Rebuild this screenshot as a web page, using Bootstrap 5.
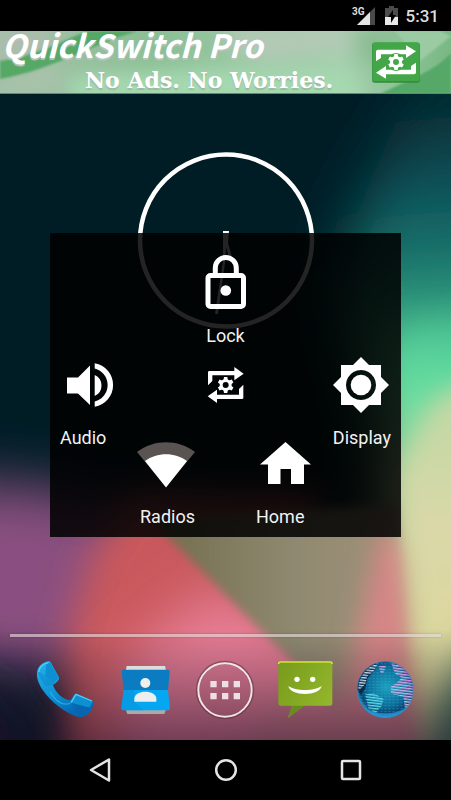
<!DOCTYPE html>
<html lang="en">
<head>
<meta charset="utf-8">
<meta name="viewport" content="width=device-width, initial-scale=1">
<title>QuickSwitch Pro</title>
<link href="https://cdn.jsdelivr.net/npm/bootstrap@5.3.0/dist/css/bootstrap.min.css" rel="stylesheet">
<style>
body { font-family: Roboto, "Liberation Sans", sans-serif; background: #000; }
svg { display: block; }
.status-bar { height: 31px; padding-right: 12px; color: #dedede; font-size: 17px; line-height: 20px; }
.promo { height: 63px; padding: 0 31px 0 2px; color: #fff; background: #9cc9a5; }
.promo:hover { color: #fff; }
.promo-title { font: italic 700 32px/26px "Noto Sans CJK JP", "Noto Sans", sans-serif; text-shadow: 0 2px 1px #b9c4bb; }
.promo-sub { font: bold 22px/22px "DejaVu Serif", serif; margin-top: 12px; padding-left: 83px; text-shadow: 0 2px 1px #9db8a3; }
.backdrop { z-index: 0; }
.clock-face { top: 57px; left: 0; right: 0; }
.home-area { padding-top: 139px; }
.switcher { margin: 0 50px; padding: 22px 10px 10px; background: rgba(0, 0, 0, .86); z-index: 1; }
.tile { gap: 15px; color: #f2f2f2; font-size: 18px; line-height: 20px; width: 58px; }
.row-mid { margin-top: 11px; }
.row-low { margin-top: -6px; gap: 61px; }
.divider { height: 3px; margin: 0 10px 23px; background: #e8dcdc; opacity: .62; box-shadow: 0 0 2px #0006; }
.dock { padding: 0 25px 20px; }
.nav-keys { height: 60px; padding: 0 38px; }
</style>
</head>
<body>
<svg width="0" height="0" class="position-absolute" aria-hidden="true">
  <defs>
    <g id="gear">
      <path id="teeth" d="M-5-24H5L7-12H-7zM-5 24H5L7 12H-7z" fill="#fff"/>
      <use href="#teeth" transform="rotate(60)"/>
      <use href="#teeth" transform="rotate(120)"/>
      <circle r="13.500" fill="none" stroke="#fff" stroke-width="9"/>
    </g>
  </defs>
</svg>
<div class="d-flex flex-column min-vh-100">
  <header class="status-bar d-flex align-items-center justify-content-end bg-black fw-medium">
    <svg width="26" height="31" viewBox="0 0 26 31" role="img" aria-label="3G signal">
      <text x="2" y="15" font-size="10" font-weight="700" fill="#dedede" font-family="Roboto, sans-serif">3G</text>
      <path d="M25 7V25H7z" fill="#494949"/><path d="M20 12V25H7z" fill="#e4e4e4"/>
    </svg>
    <svg width="14" height="31" viewBox="0 0 14 31" class="ms-2 me-2" role="img" aria-label="Battery charging">
      <path d="M5 6h5v2h4v9H1V8h4z" fill="#4b4b4b"/><path d="M1 17h13v8H1z" fill="#e8e8e8"/>
      <path d="M9 10v5h3l-5 8v-6H4z" fill="#000"/>
    </svg>
    <span>5:31</span>
  </header>

  <a href="#" class="promo d-flex align-items-center justify-content-between text-decoration-none position-relative">
    <svg class="backdrop position-absolute top-0 start-0 w-100 h-100" viewBox="0 0 451 63" preserveAspectRatio="none" aria-hidden="true">
      <defs>
        <filter id="soft" x="-30%" y="-30%" width="160%" height="160%"><feGaussianBlur stdDeviation="9"/></filter>
        <filter id="fine" x="-30%" y="-30%" width="160%" height="160%"><feGaussianBlur stdDeviation="1"/></filter>
        <linearGradient id="pb"><stop offset="0" stop-color="#a3bfa7"/><stop offset=".35" stop-color="#8cbf96"/><stop offset=".75" stop-color="#a6cfae"/><stop offset="1" stop-color="#79b885"/></linearGradient>
      </defs>
      <rect width="451" height="63" fill="url(#pb)"/>
      <g filter="url(#soft)">
        <path d="M0 0H75L30 20 0 32z" fill="#b0bcb0"/>
        <path d="M0 50L60 30V63H0z" fill="#a9c3ab"/>
        <path d="M70 45L200 38 350 40 370 75H70z" fill="#a5d9b0"/>
        <path d="M225 -5H350L355 15 270 30 230 20z" fill="#b3c9b5"/>
        <path d="M350 0H400L370 40z" fill="#8abb92"/>
      </g>
      <g filter="url(#fine)">
        <path d="M0 30C40 24 65 8 88 0H138C95 12 55 38 0 48z" fill="#55a866"/>
        <path d="M380 63C410 48 435 40 451 22V63z" fill="#55a868"/>
        <path d="M395 0H440L451 5 420 30z" fill="#9bcba3"/>
      </g>
      <path d="M0 62.500H451" stroke="#638b6b"/>
    </svg>
    <span class="d-flex flex-column align-self-start position-relative text-nowrap">
      <span class="promo-title">QuickSwitch Pro</span>
      <span class="promo-sub">No Ads. No Worries.</span>
    </span>
    <svg width="48" height="41" viewBox="441 126 144 123" class="position-relative" role="img" aria-label="QuickSwitch">
      <rect x="441" y="128" width="144" height="120" rx="9" fill="#328a39"/>
      <rect x="442" y="127" width="142" height="117" rx="8" fill="#43a648"/>
      <g transform="translate(513 186)">
        <path id="bannerArrow" d="M-60 -2V-31Q-60-37-54-37H30V-50L60-32 30-12V-23H-45V-12z" fill="#fff"/>
        <use href="#bannerArrow" transform="rotate(180)"/>
        <circle r="27" fill="#43a648"/>
        <use href="#gear"/>
      </g>
    </svg>
  </a>

  <main class="home-area flex-grow-1 d-flex flex-column position-relative overflow-hidden">
    <svg class="backdrop position-absolute top-0 start-0 w-100 h-100" viewBox="0 0 451 646" preserveAspectRatio="none" aria-hidden="true">
      <defs>
        <filter id="b30" x="-50%" y="-50%" width="200%" height="200%"><feGaussianBlur stdDeviation="28"/></filter>
        <filter id="b18" x="-50%" y="-50%" width="200%" height="200%"><feGaussianBlur stdDeviation="18"/></filter>
        <filter id="b12" x="-50%" y="-50%" width="200%" height="200%"><feGaussianBlur stdDeviation="12"/></filter>
        <filter id="b6" x="-50%" y="-50%" width="200%" height="200%"><feGaussianBlur stdDeviation="5"/></filter>
        <linearGradient id="edge" gradientUnits="userSpaceOnUse" x1="400" y1="0" x2="430" y2="646">
          <stop offset="0" stop-color="#03262d"/><stop offset=".08" stop-color="#0a3d45"/><stop offset=".17" stop-color="#10585e"/><stop offset=".26" stop-color="#17746c"/>
          <stop offset=".33" stop-color="#2c9479"/><stop offset=".4" stop-color="#55d29b"/><stop offset=".46" stop-color="#68dea0"/><stop offset=".54" stop-color="#8ad9a0"/>
          <stop offset=".6" stop-color="#b5d69b"/><stop offset="1" stop-color="#c4bd83"/>
        </linearGradient>
        <linearGradient id="olive" x2="1"><stop offset="0" stop-color="#716b4c"/><stop offset=".5" stop-color="#8f8970"/><stop offset="1" stop-color="#a8957d"/></linearGradient>
        <linearGradient id="yellow" x2="0" y2="1"><stop offset="0" stop-color="#bdd8a3"/><stop offset=".3" stop-color="#dbd8a9"/><stop offset=".65" stop-color="#ddd798"/><stop offset="1" stop-color="#c9c787"/></linearGradient>
        <linearGradient id="dim" x2="0" y2="1"><stop offset="0" stop-color="#160a20" stop-opacity="0"/><stop offset="1" stop-color="#160a20" stop-opacity=".55"/></linearGradient>
      </defs>
      <rect width="451" height="646" fill="#001d26"/>
      <path d="M620 -100H430L395 30 358 120 335 200 375 320 380 760H620z" fill="url(#edge)" filter="url(#b30)"/>
      <path d="M395 260L430 235 620 210V760H395z" fill="url(#edge)" filter="url(#b18)"/>
      <path d="M-60 385L60 395 200 430V580H-60z" fill="#8a5080" filter="url(#b30)"/>
      <path d="M55 760L68 540 92 460 130 400H320V760z" fill="#c9585c" filter="url(#b18)"/>
      <path d="M120 570L220 490 400 600V760H100z" fill="#e88099" filter="url(#b30)"/>
      <path d="M150 425L400 410 412 760H440L300 575z" fill="url(#olive)" filter="url(#b6)"/>
      <path d="M383 430L410 460 425 760H312L352 570z" fill="#d58686" filter="url(#b12)"/>
      <path d="M180 780L270 605H420V780z" fill="#d5808c" filter="url(#b18)"/>
      <path d="M425 320Q455 270 560 300V780H438L418 560 404 450 398 385z" fill="url(#yellow)" filter="url(#b12)"/>
      <path d="M-80 585H0L25 625 50 760H-80z" fill="#141f30" filter="url(#b30)"/>
      <path d="M420 760L435 620 470 555H600V760z" fill="#3c745f" filter="url(#b18)"/>
      <rect y="535" width="451" height="111" fill="url(#dim)"/>
    </svg>
    <div class="clock-face position-absolute d-flex justify-content-center" role="img" aria-label="Analog clock">
      <svg width="180" height="180" viewBox="0 0 180 180">
        <circle cx="90" cy="89.500" r="86" fill="none" stroke="#fff" stroke-width="4.500"/>
        <path d="M87 80H93L92 92 96 106H93L90 96 89 112 82 163H79L87 110z" fill="#fff"/>
      </svg>
    </div>
    <section class="switcher position-relative" aria-label="Quick switches">
      <div class="d-flex justify-content-center">
        <button type="button" class="tile btn p-0 border-0 d-flex flex-column align-items-center">
          <svg width="58" height="56" viewBox="0 0 58 56" fill="none" stroke="#fff" aria-hidden="true">
            <rect x="11" y="20.500" width="35.500" height="31" rx="2.500" stroke-width="5"/>
            <path d="M18.300 20V13a10.500 10.500 0 0 1 21 0V20" stroke-width="5"/>
            <circle cx="28.800" cy="35.500" r="5.300" fill="#fff" stroke="none"/>
          </svg>
          <span>Lock</span>
        </button>
      </div>
      <div class="row-mid d-flex justify-content-between align-items-start">
        <button type="button" class="tile btn p-0 border-0 d-flex flex-column align-items-start">
          <svg width="58" height="56" viewBox="0 0 58 56" fill="#fff" aria-hidden="true">
            <path d="M7 20.500H18L30 8.500V48L18 36.500H7zM34.700 18a11.500 11.500 0 0 1 0 21zM34.700 6.300a22 22 0 0 1 0 43.400V44.500a17 17 0 0 0 0-33z"/>
          </svg>
          <span>Audio</span>
        </button>
        <button type="button" class="tile btn p-0 border-0" aria-label="QuickSwitch">
          <svg width="58" height="56" viewBox="-86 -84 174 168" aria-hidden="true">
            <path id="panelArrow" d="M-53 1V-38q0-4 4-4H26V-54L54-34 26-14V-29H-40V-12z" fill="#fff"/>
            <use href="#panelArrow" transform="rotate(180)"/>
            <use href="#gear"/>
          </svg>
        </button>
        <button type="button" class="tile btn p-0 border-0 d-flex flex-column align-items-end">
          <svg width="58" height="56" viewBox="0 0 58 56" fill="#fff" aria-hidden="true">
            <path fill-rule="evenodd" d="M28 0L36 8H48V20L56 28 48 36V48H36L28 56 20 48H8V36L0 28 8 20V8H20zM28 13a15 15 0 1 0 .01 0z"/>
            <circle cx="28" cy="28" r="10.300"/>
          </svg>
          <span>Display</span>
        </button>
      </div>
      <div class="row-low d-flex justify-content-center">
        <button type="button" class="tile btn p-0 border-0 d-flex flex-column align-items-end">
          <svg width="58" height="50" viewBox="0 0 58 50" aria-hidden="true">
            <path d="M29 45L0 10C17-3 41-3 58 10z" fill="#595452"/>
            <path d="M29 45.500L8 19C20 10 38 10 50 19z" fill="#fff"/>
          </svg>
          <span>Radios</span>
        </button>
        <button type="button" class="tile btn p-0 border-0 d-flex flex-column align-items-start">
          <svg width="58" height="50" viewBox="0 0 58 50" fill="#fff" aria-hidden="true">
            <path d="M29.500 0L55 22.500H48V42H35V27H24.500V42H12V22.500H4z"/>
          </svg>
          <span>Home</span>
        </button>
      </div>
    </section>

    <div class="divider mt-auto position-relative"></div>
    <nav class="dock row g-0 row-cols-5 position-relative" aria-label="Dock">
      <div class="col d-flex justify-content-center">
        <button type="button" class="btn p-0 border-0" aria-label="Phone">
          <svg width="60" height="60" viewBox="0 0 180 180">
            <defs><linearGradient id="ph" x2=".4" y2="1"><stop offset="0" stop-color="#22b4ea"/><stop offset=".6" stop-color="#0f93d6"/><stop offset="1" stop-color="#0668b4"/></linearGradient></defs>
            <path d="M6 39C7 20 21 8 40 4Q45 2 48 8L72 52Q74 57 69 62 63 70 54 75C63 100 82 116 104 121Q111 118 114 108 118 101 124 101L171 121Q177 124 175 133C173 156 149 174 133 171 92 161 49 128 21 87 11 70 4 54 6 39z" fill="url(#ph)"/>
            <path d="M34 11L46 8 71 54 58 65 31 48z" fill="#0d8fd2"/><path d="M31 48L58 65 54 75C46 75 39 76 34 79 21 68 9 45 11 34z" fill="#0a73bd" opacity=".3"/>
            <path d="M109 128L123 104 173 125 163 143z" fill="#0d8fd2"/><path d="M11 36C13 22 25 12 40 8M108 128L123 103 171 123" fill="none" stroke="#55cdf6" stroke-width="4"/>
            <path d="M45 95C62 126 82 138 106 130" fill="none" stroke="#2db9ee" stroke-width="4" opacity=".7"/>
            <path d="M108 128L163 143C157 160 145 169 133 168z" fill="#0860ab" opacity=".45"/>
          </svg>
        </button>
      </div>
      <div class="col d-flex justify-content-center">
        <button type="button" class="btn p-0 border-0" aria-label="Contacts">
          <svg width="60" height="60" viewBox="-5 0 180 180">
            <path d="M26 40L30 18H145L150 40z" fill="#ddd"/><path d="M24 140L32 162H143L151 140z" fill="#aaa"/>
            <path d="M15 35Q14 29 20 29H154Q160 29 159 35L154 90H21z" fill="#0b7cc1"/>
            <path d="M21 90H154L160 144Q160 151 154 151H20Q14 151 14 144z" fill="#05a6f2"/>
            <path d="M21 90H53V124L80 151H20Q14 151 14 144z" fill="#0795dc" opacity=".6"/>
            <circle cx="86" cy="69" r="15" fill="#eee"/><path d="M53 125V116C53 88 119 88 119 116V125z" fill="#eee"/>
          </svg>
        </button>
      </div>
      <div class="col d-flex justify-content-center">
        <button type="button" class="btn p-0 border-0" aria-label="All apps">
          <svg width="60" height="60" viewBox="0 0 180 180">
            <circle cx="90" cy="90" r="82" fill="none" stroke="#5b2b38" stroke-opacity=".5" stroke-width="11"/>
            <circle cx="90" cy="90" r="80" fill="none" stroke="#f1e4e7" stroke-width="6"/>
            <path d="M46 63h19v19H46zM81 63h19v19H81zM116 63h19v19h-19zM46 99h19v19H46zM81 99h19v19H81zM116 99h19v19h-19z" fill="#eddfe2"/>
          </svg>
        </button>
      </div>
      <div class="col d-flex justify-content-center">
        <button type="button" class="btn p-0 border-0" aria-label="Messaging">
          <svg width="60" height="60" viewBox="0 0 180 180">
            <defs><linearGradient id="ms" x2="1" y2=".6"><stop offset="0" stop-color="#779b1b"/><stop offset="1" stop-color="#92b52b"/></linearGradient></defs>
            <path d="M7 10Q7 4 13 4H163Q169 4 169 10V130Q169 137 163 137H84L36 173 48 137H13Q7 137 7 130z" fill="url(#ms)"/>
            <path d="M48 137H84L36 173z" fill="#688c1d"/>
            <path d="M8 12Q8 6 13 6H163Q168 6 168 12" fill="none" stroke="#cfe338" stroke-width="5"/>
            <circle cx="63" cy="58" r="8" fill="#fff"/><circle cx="110" cy="58" r="8" fill="#fff"/>
            <path d="M37 78C60 94 113 94 137 78 132 110 42 110 37 78z" fill="#fff"/>
          </svg>
        </button>
      </div>
      <div class="col d-flex justify-content-center">
        <button type="button" class="btn p-0 border-0" aria-label="Browser">
          <svg width="60" height="60" viewBox="0 0 180 180">
            <defs>
              <radialGradient id="gl" cx=".52" cy=".45" r=".55"><stop offset="0" stop-color="#1c9fbe"/><stop offset=".6" stop-color="#0d6f9b"/><stop offset=".85" stop-color="#0b4672"/><stop offset="1" stop-color="#2f9bd6"/></radialGradient>
              <linearGradient id="mag" y1="1" x2="1" y2="0"><stop offset="0" stop-color="#b5c9ec"/><stop offset=".6" stop-color="#d8a7e2"/><stop offset="1" stop-color="#ee33e2"/></linearGradient>
              <pattern id="dash" width="12" height="9" patternUnits="userSpaceOnUse"><path d="M1 2h7" stroke="#39b8dc" stroke-width="1.500"/></pattern>
              <pattern id="lines" width="20" height="8" patternUnits="userSpaceOnUse" patternTransform="rotate(7)"><rect width="20" height="4" fill="#fff"/></pattern>
              <mask id="land"><rect width="180" height="180" fill="url(#lines)"/></mask>
              <clipPath id="ball"><circle cx="88" cy="89" r="85"/></clipPath>
            </defs>
            <g clip-path="url(#ball)">
              <circle cx="88" cy="89" r="85" fill="url(#gl)"/>
              <rect width="180" height="180" fill="url(#dash)" opacity=".7"/>
              <path d="M4 90C0 50 35 12 62 10L55 32 34 55 28 85 15 105z" fill="#082d50"/>
              <g mask="url(#land)">
                <path d="M8 92C4 58 30 20 66 10L52 35 34 48 28 72z" fill="#c9d9ea"/>
                <path d="M68 18H90L82 40H74z" fill="#d8a0dc"/>
                <path d="M104 7L150 22 174 65V98L158 150 146 140 142 110 105 101 104 80 126 65 136 52 118 42z" fill="url(#mag)"/>
                <path d="M28 103L52 98 84 118 75 140 58 160 36 142z" fill="#5fdce6"/>
              </g>
              <path d="M22 144C60 165 115 165 153 144L135 174H42z" fill="#269bdd" opacity=".65"/>
            </g>
            <circle cx="88" cy="89" r="84" fill="none" stroke="#2a8ac5" stroke-width="2"/>
          </svg>
        </button>
      </div>
    </nav>
  </main>

  <footer class="nav-keys row g-0 row-cols-3 align-items-center bg-black">
    <div class="col d-flex justify-content-center">
      <button type="button" class="btn p-0 border-0" aria-label="Back">
        <svg width="24" height="26" viewBox="0 0 24 26" fill="none" stroke="#e4e4e4" stroke-width="2.500" stroke-linejoin="round"><path d="M20 2.500V23.500L2 13z"/></svg>
      </button>
    </div>
    <div class="col d-flex justify-content-center">
      <button type="button" class="btn p-0 border-0" aria-label="Home screen">
        <svg width="24" height="26" viewBox="0 0 24 26" fill="none" stroke="#e4e4e4" stroke-width="2.500"><circle cx="12" cy="13" r="9.800"/></svg>
      </button>
    </div>
    <div class="col d-flex justify-content-center">
      <button type="button" class="btn p-0 border-0" aria-label="Recent apps">
        <svg width="24" height="26" viewBox="0 0 24 26" fill="none" stroke="#e4e4e4" stroke-width="2.500"><rect x="3" y="4" width="18" height="18" rx="1"/></svg>
      </button>
    </div>
  </footer>
</div>
<script src="https://cdn.jsdelivr.net/npm/bootstrap@5.3.0/dist/js/bootstrap.bundle.min.js"></script>
</body>
</html>
